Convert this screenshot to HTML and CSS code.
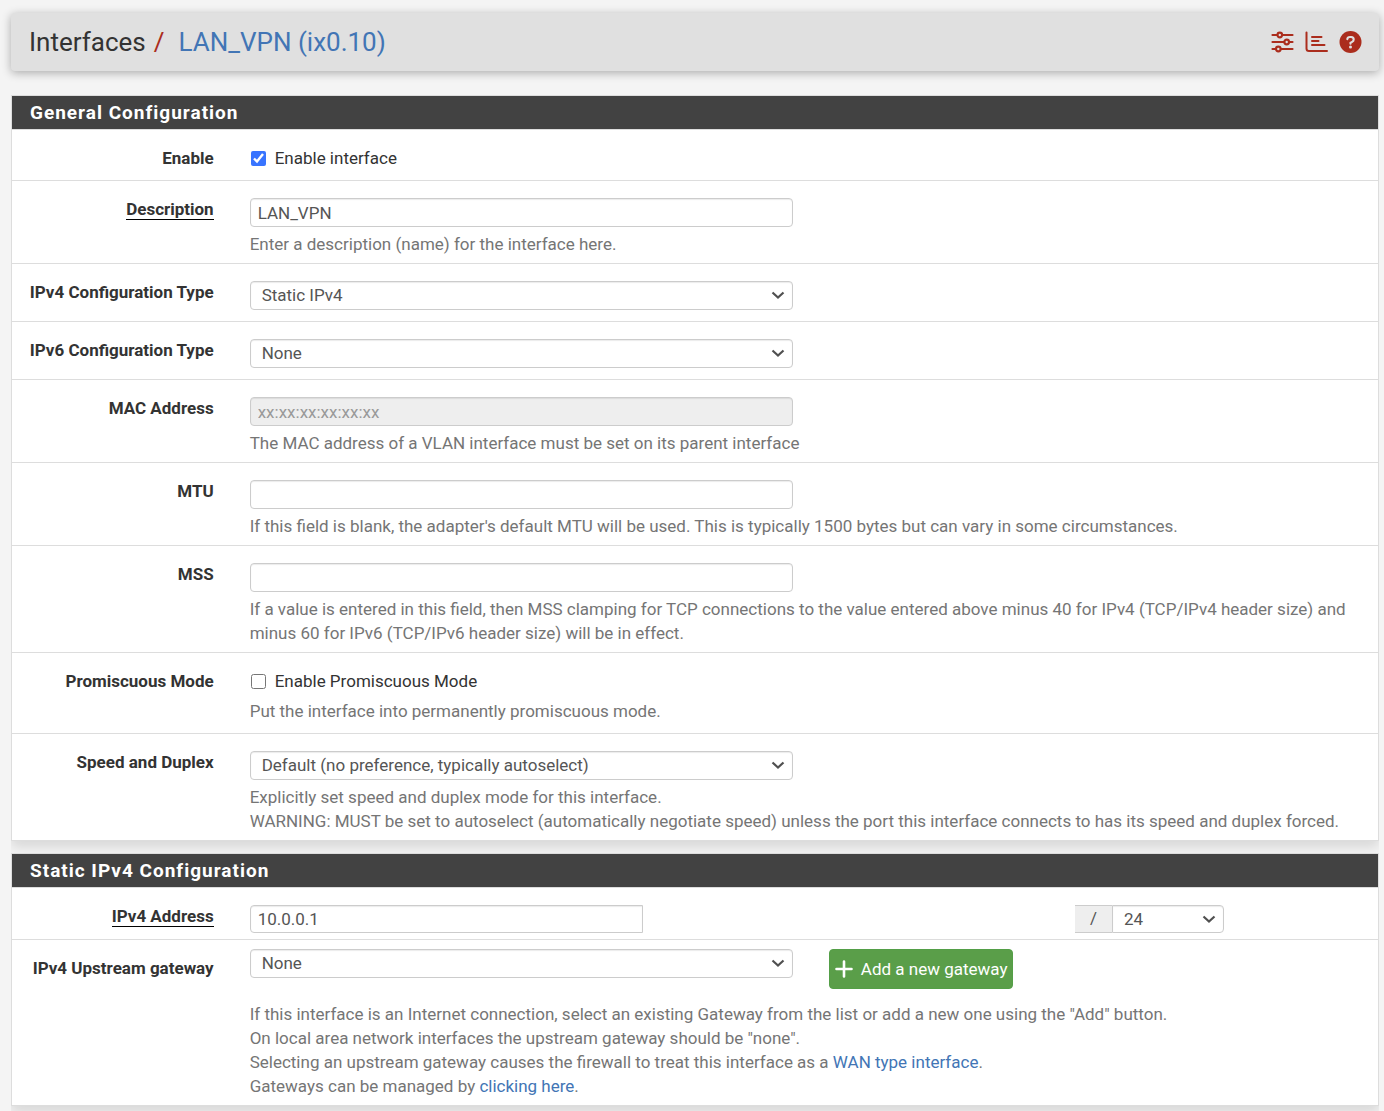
FILE: index.html
```html
<!DOCTYPE html>
<html lang="en">
<head>
<meta charset="utf-8">
<title>Interfaces: LAN_VPN (ix0.10)</title>
<link rel="stylesheet" href="styles.css">
</head>
<body>
<header class="page-header">
  <h1 class="breadcrumb">Interfaces<span class="slash">/</span><a href="#">LAN_VPN (ix0.10)</a></h1>
  <nav class="shortcuts">
    <a href="#" aria-label="Related settings">
      <svg width="23" height="22" viewBox="0 0 23 22" fill="none" stroke="currentColor" stroke-width="2.200" stroke-linecap="round">
        <path d="M1.500 4H6M11.500 4H21.500M1.500 11H13M18.500 11H21.500M1.500 18H4.500M10 18H21.500"/>
        <circle cx="8.800" cy="4" r="2.300"/><circle cx="15.700" cy="11" r="2.300"/><circle cx="7.300" cy="18" r="2.300"/>
      </svg>
    </a>
    <a href="#" aria-label="Related status">
      <svg width="23" height="22" viewBox="0 0 23 22" fill="none" stroke="currentColor" stroke-width="2" stroke-linecap="round">
        <path d="M1.500 1.500V17.500Q1.500 20 4 20H22M7 6H16.500M7 10H13.500M7 14H19.500"/>
      </svg>
    </a>
    <a href="#" aria-label="Help">
      <svg width="23" height="22" viewBox="0 0 23 22">
        <circle cx="11.500" cy="11" r="11" fill="currentColor"/>
        <path d="M8.300 8.200Q8.500 6 11 6H12.200Q14.700 6.200 14.700 8.500Q14.700 10 13.100 10.900L11.500 11.900V12.800" fill="none" stroke="#e0e0e0" stroke-width="2.100" stroke-linecap="round"/>
        <circle cx="11.500" cy="16" r="1.500" fill="#e0e0e0"/>
      </svg>
    </a>
  </nav>
</header>

<form class="form">
  <section class="panel">
    <h2 class="panel-title">General Configuration</h2>

    <div class="row">
      <span class="label">Enable</span>
      <div class="content check-content">
        <label class="check"><input type="checkbox" checked>Enable interface</label>
      </div>
    </div>

    <div class="row">
      <label class="label" for="descr"><span class="required">Description</span></label>
      <div class="content">
        <input class="control" id="descr" type="text" value="LAN_VPN">
        <p class="help">Enter a description (name) for the interface here.</p>
      </div>
    </div>

    <div class="row">
      <label class="label" for="type4">IPv4 Configuration Type</label>
      <div class="content select-content">
        <select class="control" id="type4"><option>Static IPv4</option></select>
      </div>
    </div>

    <div class="row">
      <label class="label" for="type6">IPv6 Configuration Type</label>
      <div class="content select-content">
        <select class="control" id="type6"><option>None</option></select>
      </div>
    </div>

    <div class="row">
      <label class="label" for="mac">MAC Address</label>
      <div class="content">
        <input class="control" id="mac" type="text" placeholder="xx:xx:xx:xx:xx:xx" disabled>
        <p class="help">The MAC address of a VLAN interface must be set on its parent interface</p>
      </div>
    </div>

    <div class="row">
      <label class="label" for="mtu">MTU</label>
      <div class="content">
        <input class="control" id="mtu" type="text">
        <p class="help">If this field is blank, the adapter's default MTU will be used. This is typically 1500 bytes but can vary in some circumstances.</p>
      </div>
    </div>

    <div class="row">
      <label class="label" for="mss">MSS</label>
      <div class="content">
        <input class="control" id="mss" type="text">
        <p class="help">If a value is entered in this field, then MSS clamping for TCP connections to the value entered above minus 40 for IPv4 (TCP/IPv4 header size) and minus 60 for IPv6 (TCP/IPv6 header size) will be in effect.</p>
      </div>
    </div>

    <div class="row">
      <span class="label">Promiscuous Mode</span>
      <div class="content check-content">
        <label class="check"><input type="checkbox">Enable Promiscuous Mode</label>
        <p class="help">Put the interface into permanently promiscuous mode.</p>
      </div>
    </div>

    <div class="row">
      <label class="label" for="media">Speed and Duplex</label>
      <div class="content">
        <select class="control" id="media"><option>Default (no preference, typically autoselect)</option></select>
        <p class="help">Explicitly set speed and duplex mode for this interface.<br>WARNING: MUST be set to autoselect (automatically negotiate speed) unless the port this interface connects to has its speed and duplex forced.</p>
      </div>
    </div>
  </section>

  <section class="panel">
    <h2 class="panel-title">Static IPv4 Configuration</h2>

    <div class="row">
      <label class="label" for="ipaddr"><span class="required">IPv4 Address</span></label>
      <div class="content address-content">
        <div class="address">
          <input class="control address-ip" id="ipaddr" type="text" value="10.0.0.1">
          <div class="mask">
            <span class="mask-slash">/</span>
            <select class="control mask-bits" aria-label="Subnet mask"><option>24</option></select>
          </div>
        </div>
      </div>
    </div>

    <div class="row">
      <label class="label" for="gateway">IPv4 Upstream gateway</label>
      <div class="content gateway-content">
        <div class="gateway">
          <select class="control" id="gateway"><option>None</option></select>
          <button class="add" type="button">
            <svg width="18" height="18" viewBox="0 0 18 18" fill="none" stroke="currentColor" stroke-width="2.600" stroke-linecap="round"><path d="M9 1.500V16.500M1.500 9H16.500"/></svg>
            Add a new gateway
          </button>
        </div>
        <p class="help">If this interface is an Internet connection, select an existing Gateway from the list or add a new one using the "Add" button.<br>On local area network interfaces the upstream gateway should be "none".<br>Selecting an upstream gateway causes the firewall to treat this interface as a <a href="#">WAN type interface</a>.<br>Gateways can be managed by <a href="#">clicking here</a>.</p>
      </div>
    </div>
  </section>
</form>
</body>
</html>
```
FILE: styles.css
```css
* {
  box-sizing: border-box;
}

body {
  margin: 0;
  padding: 13px 5px 5px 11px;
  background: #f4f4f4;
  color: #333;
  font: 17px/24px Roboto, sans-serif;
}

a {
  color: #4275b5;
  text-decoration: none;
}

.page-header {
  display: flex;
  align-items: center;
  justify-content: space-between;
  min-height: 58px;
  padding: 0 17px 0 18px;
  border-radius: 4px;
  background: #e0e0e0;
  box-shadow: 0 2px 10px rgba(0, 0, 0, 0.3);
}

.breadcrumb {
  margin: 0;
  font-size: 26px;
  font-weight: 400;
  line-height: 32px;
}

.slash {
  margin: 0 14px 0 8px;
  color: #ab2d1d;
}

.shortcuts {
  display: flex;
  gap: 11px;
}

.shortcuts a {
  color: #ab2d1d;
}

.shortcuts svg {
  display: block;
}

.form {
  display: flex;
  flex-direction: column;
  gap: 12px;
  margin-top: 24px;
}

.panel {
  border: 1px solid #ddd;
  background: #fff;
  box-shadow: 0 6px 12px rgba(0, 0, 0, 0.12);
  clip-path: inset(0 0 -20px 0);
}

.panel-title {
  margin: 0;
  padding: 5px 18px 4px;
  background: #424242;
  color: #fff;
  font-size: 19px;
  font-weight: 700;
  line-height: 24px;
  letter-spacing: 1px;
}

.row {
  display: grid;
  grid-template-columns: 1fr 5fr;
  border-top: 1px solid #ddd;
}

.label {
  padding: 16px 26px 0 0;
  text-align: right;
  font-weight: 700;
}

.required {
  border-bottom: 1px solid #000;
}

.content {
  padding: 17px 0 7px 10px;
}

.check-content {
  padding: 16px 0 10px 10px;
}

.select-content {
  padding-bottom: 11px;
}

.check {
  display: flex;
  align-items: center;
  gap: 9px;
}

.check input {
  width: 15px;
  height: 15px;
  margin: 1px 0 0 1px;
  accent-color: #3874ff;
}

.control {
  display: block;
  width: calc(50% - 21px);
  height: 29px;
  padding: 0 7px;
  border: 1px solid #ccc;
  border-radius: 4px;
  background: #fff;
  box-shadow: inset 0 1px 1px rgba(0, 0, 0, 0.08);
  color: #555;
  font: inherit;
}

.control:disabled {
  background: #eee;
}

.control::placeholder {
  color: #999;
}

select.control {
  appearance: none;
  padding: 0 30px 1px 11px;
  background: #fff url("data:image/svg+xml,%3Csvg xmlns='http://www.w3.org/2000/svg' width='14' height='9' viewBox='0 0 14 9'%3E%3Cpath d='M1.500 1.500L7 6.500L12.500 1.500' fill='none' stroke='%23505050' stroke-width='2.200'/%3E%3C/svg%3E") no-repeat right 7px center;
}

.help {
  margin: 5px 26px 0 0;
  color: #757575;
}

.check-content .help {
  margin-top: 6px;
}

.address-content {
  padding-bottom: 6px;
}

.address {
  display: flex;
  justify-content: space-between;
  width: calc(100% - 154px);
}

.address .control {
  height: 28px;
}

.address .address-ip {
  width: calc(40% + 4px);
  border-radius: 4px 0 0 4px;
}

.mask {
  display: flex;
}

.mask-slash {
  width: 37px;
  border: solid #ccc;
  border-width: 1px 0;
  background: #eee;
  color: #555;
  text-align: center;
}

.mask .mask-bits {
  width: 112px;
  border-radius: 0 4px 4px 0;
}

.gateway-content {
  padding-top: 9px;
}

.gateway {
  display: flex;
  gap: 36px;
  margin-bottom: 13px;
}

.add {
  display: flex;
  align-items: center;
  gap: 8px;
  height: 40px;
  padding: 0 5px;
  border: 1px solid #549f47;
  border-radius: 4px;
  background: #5a9e49;
  color: #fff;
  font: inherit;
  white-space: nowrap;
}
```
